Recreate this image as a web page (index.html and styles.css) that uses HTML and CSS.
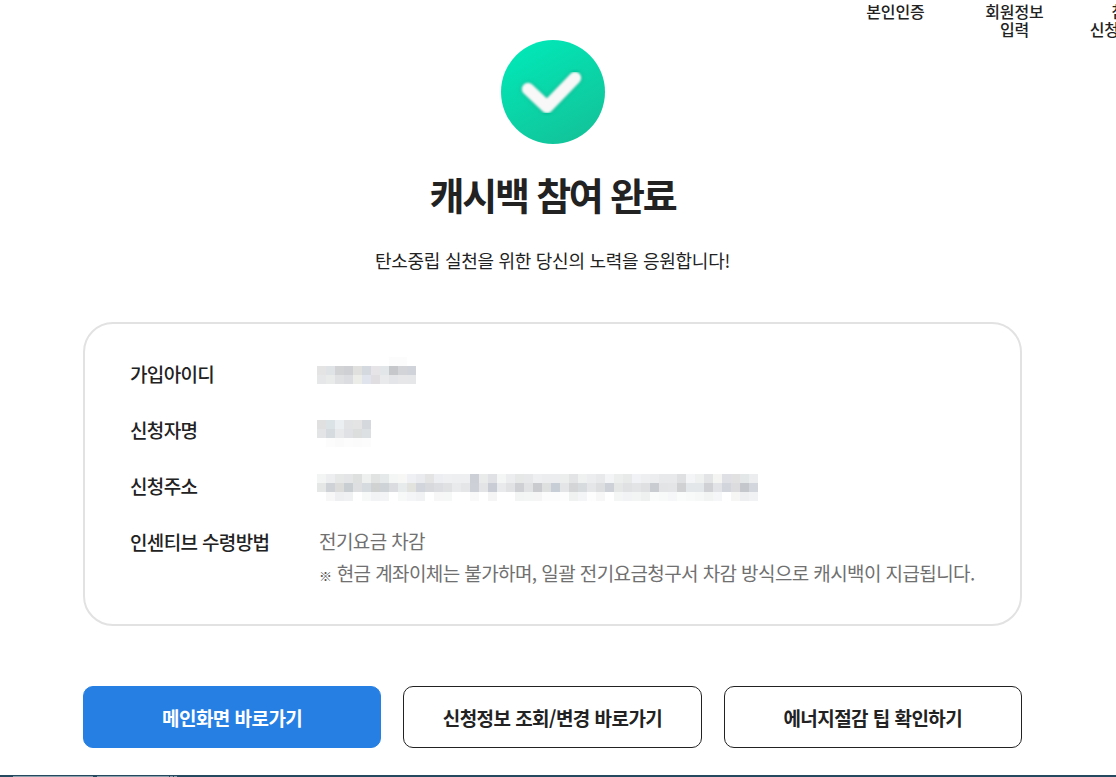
FILE: index.html
```html
<!DOCTYPE html>
<html lang="ko">
<head>
<meta charset="utf-8">
<title>캐시백 참여 완료</title>
<link rel="stylesheet" href="styles.css">
</head>
<body>
<div class="page">
  <ol class="steps">
    <li class="step">본인인증</li>
    <li class="step">회원정보<br>입력</li>
    <li class="step">참여자<br>신청정보입력</li>
  </ol>
  <main class="content">
    <svg class="check" width="106" height="106" viewBox="0 0 106 106" aria-hidden="true">
      <defs>
        <linearGradient id="g" x1="0.25" y1="0.05" x2="0.75" y2="0.95">
          <stop offset="0" stop-color="#02e6b6"/>
          <stop offset="1" stop-color="#12c49a"/>
        </linearGradient>
        <filter id="b" x="-20%" y="-20%" width="140%" height="140%"><feGaussianBlur stdDeviation="0.9"/></filter>
        <filter id="s" x="-30%" y="-30%" width="160%" height="160%"><feGaussianBlur stdDeviation="2"/></filter>
      </defs>
      <circle cx="53" cy="53" r="52" fill="url(#g)"/>
      <path d="M28 50 L47 68 L75 39" class="check-shadow" filter="url(#s)"/>
      <path d="M28 50 L47 68 L75 39" class="check-mark" filter="url(#b)"/>
    </svg>
    <h1 class="title">캐시백 참여 완료</h1>
    <p class="sub">탄소중립 실천을 위한 당신의 노력을 응원합니다!</p>
    <section class="card">
      <div class="row">
        <div class="label">가입아이디</div>
        <svg class="mosaic mosaic-id" width="99" height="27" viewBox="0 0 11 3" shape-rendering="crispEdges" aria-hidden="true">
          <rect x="8" y="0" fill="#fcfcfc"/><rect x="9" y="0" fill="#fcfcfc"/>
          <rect x="0" y="1" fill="#e4e4e4"/><rect x="1" y="1" fill="#dfe3e6"/><rect x="2" y="1" fill="#d2d3d5"/><rect x="3" y="1" fill="#cfd0d4"/><rect x="4" y="1" fill="#e0e1df"/><rect x="5" y="1" fill="#d4d9df"/><rect x="6" y="1" fill="#e6e4e6"/><rect x="7" y="1" fill="#e3e6e8"/><rect x="8" y="1" fill="#c6c7ca"/><rect x="9" y="1" fill="#d3d4d7"/><rect x="10" y="1" fill="#d0d4da"/>
          <rect x="0" y="2" fill="#e6e7e8"/><rect x="1" y="2" fill="#e9eaea"/><rect x="2" y="2" fill="#e0e1e2"/><rect x="3" y="2" fill="#dcdde0"/><rect x="4" y="2" fill="#ecece8"/><rect x="5" y="2" fill="#e0e4ec"/><rect x="6" y="2" fill="#e0dee1"/><rect x="7" y="2" fill="#e8eaec"/><rect x="8" y="2" fill="#e3e5e8"/><rect x="9" y="2" fill="#e7e7e9"/><rect x="10" y="2" fill="#e6e7e8"/>
        </svg>
      </div>
      <div class="row">
        <div class="label">신청자명</div>
        <svg class="mosaic mosaic-name" width="54" height="27" viewBox="0 0 6 3" shape-rendering="crispEdges" aria-hidden="true">
          <rect x="0" y="0" fill="#e0e0e1"/><rect x="1" y="0" fill="#dce3e7"/><rect x="2" y="0" fill="#eceff1"/><rect x="3" y="0" fill="#e1e3e5"/><rect x="4" y="0" fill="#e3e4e3"/><rect x="5" y="0" fill="#d5d9de"/>
          <rect x="0" y="1" fill="#e3e4e5"/><rect x="1" y="1" fill="#d5dbdf"/><rect x="2" y="1" fill="#e8e9ea"/><rect x="3" y="1" fill="#dfe1e4"/><rect x="4" y="1" fill="#dcdddd"/><rect x="5" y="1" fill="#dde0e3"/>
          <rect x="1" y="2" fill="#fcfcfc"/><rect x="2" y="2" fill="#fafafa"/><rect x="3" y="2" fill="#fcfcfc"/><rect x="4" y="2" fill="#fbfbfb"/><rect x="5" y="2" fill="#fcfcfc"/>
        </svg>
      </div>
      <div class="row">
        <div class="label">신청주소</div>
        <svg class="mosaic mosaic-addr" width="441" height="27" viewBox="0 0 49 3" shape-rendering="crispEdges" aria-hidden="true">
          <rect x="0" y="0" fill="#f3f4f4"/><rect x="1" y="0" fill="#eceef0"/><rect x="2" y="0" fill="#e6e7e7"/><rect x="3" y="0" fill="#e3e5e6"/><rect x="4" y="0" fill="#dedfdf"/><rect x="5" y="0" fill="#eef0f0"/><rect x="6" y="0" fill="#e0e3e1"/><rect x="7" y="0" fill="#e6e9ea"/><rect x="8" y="0" fill="#f4f6f5"/><rect x="9" y="0" fill="#f7f7f5"/><rect x="10" y="0" fill="#eef0f3"/><rect x="11" y="0" fill="#eaebef"/><rect x="12" y="0" fill="#e3e4e3"/><rect x="13" y="0" fill="#eceef1"/><rect x="14" y="0" fill="#eef0f1"/><rect x="15" y="0" fill="#eeeff0"/><rect x="16" y="0" fill="#eeeff0"/><rect x="17" y="0" fill="#ccd0d6"/><rect x="18" y="0" fill="#e9eaea"/><rect x="19" y="0" fill="#dfe1e5"/><rect x="20" y="0" fill="#f4f5f5"/><rect x="21" y="0" fill="#ecedef"/><rect x="22" y="0" fill="#e6e7e7"/><rect x="23" y="0" fill="#e6e8ea"/><rect x="24" y="0" fill="#eeeff0"/><rect x="25" y="0" fill="#ecedef"/><rect x="26" y="0" fill="#ebedee"/><rect x="27" y="0" fill="#eceded"/><rect x="28" y="0" fill="#e3e4e5"/><rect x="29" y="0" fill="#eff1f0"/><rect x="30" y="0" fill="#ebedee"/><rect x="31" y="0" fill="#e8e9ea"/><rect x="32" y="0" fill="#f2f4f6"/><rect x="33" y="0" fill="#eceded"/><rect x="34" y="0" fill="#e8e9e9"/><rect x="35" y="0" fill="#f0f2f5"/><rect x="36" y="0" fill="#eeeff0"/><rect x="37" y="0" fill="#ecedee"/><rect x="38" y="0" fill="#e8e9ea"/><rect x="39" y="0" fill="#e8e9ea"/><rect x="40" y="0" fill="#dfe0e1"/><rect x="41" y="0" fill="#f3f5f6"/><rect x="42" y="0" fill="#eff1f1"/><rect x="43" y="0" fill="#e3e4e5"/><rect x="44" y="0" fill="#f4f5f3"/><rect x="45" y="0" fill="#dfe0e6"/><rect x="46" y="0" fill="#e2e1e2"/><rect x="47" y="0" fill="#e4e7e8"/><rect x="48" y="0" fill="#ebedef"/>
          <rect x="0" y="1" fill="#e5e6e6"/><rect x="1" y="1" fill="#cfd3d8"/><rect x="2" y="1" fill="#dcdcda"/><rect x="3" y="1" fill="#c9ced3"/><rect x="4" y="1" fill="#dddfe0"/><rect x="5" y="1" fill="#d6dbdf"/><rect x="6" y="1" fill="#d0d2d2"/><rect x="7" y="1" fill="#ced3d8"/><rect x="8" y="1" fill="#dadcdf"/><rect x="9" y="1" fill="#e8ebec"/><rect x="10" y="1" fill="#e2e2de"/><rect x="11" y="1" fill="#d2d5dc"/><rect x="12" y="1" fill="#d7d9dd"/><rect x="13" y="1" fill="#dbdde0"/><rect x="14" y="1" fill="#e0e1e3"/><rect x="15" y="1" fill="#e9eaec"/><rect x="16" y="1" fill="#e5e6e8"/><rect x="17" y="1" fill="#cdd1d7"/><rect x="18" y="1" fill="#e3e4e5"/><rect x="19" y="1" fill="#c9ccd5"/><rect x="20" y="1" fill="#e9eaeb"/><rect x="21" y="1" fill="#e1e2e3"/><rect x="22" y="1" fill="#ced0d3"/><rect x="23" y="1" fill="#e0e2e3"/><rect x="24" y="1" fill="#c9cbcf"/><rect x="25" y="1" fill="#dee0df"/><rect x="26" y="1" fill="#c8ced5"/><rect x="27" y="1" fill="#e4e5e6"/><rect x="28" y="1" fill="#d3d5d6"/><rect x="29" y="1" fill="#d8dbde"/><rect x="30" y="1" fill="#e5e6e7"/><rect x="31" y="1" fill="#dcdee0"/><rect x="32" y="1" fill="#ced2d8"/><rect x="33" y="1" fill="#e5e6e6"/><rect x="34" y="1" fill="#dfe1e2"/><rect x="35" y="1" fill="#e2e4e5"/><rect x="36" y="1" fill="#dee0e1"/><rect x="37" y="1" fill="#c9ccd0"/><rect x="38" y="1" fill="#e2e4e6"/><rect x="39" y="1" fill="#e4e5e7"/><rect x="40" y="1" fill="#cfd1d3"/><rect x="41" y="1" fill="#e3e7ea"/><rect x="42" y="1" fill="#e4e7e9"/><rect x="43" y="1" fill="#cfd1d4"/><rect x="44" y="1" fill="#e1e3e6"/><rect x="45" y="1" fill="#d3d5dd"/><rect x="46" y="1" fill="#dcdbdd"/><rect x="47" y="1" fill="#c4c8cd"/><rect x="48" y="1" fill="#d3d7dd"/>
          <rect x="1" y="2" fill="#f7f7f7"/><rect x="2" y="2" fill="#eeeff0"/><rect x="3" y="2" fill="#eff1f3"/><rect x="5" y="2" fill="#f7f8f8"/><rect x="6" y="2" fill="#f1f3f4"/><rect x="7" y="2" fill="#f3f4f5"/><rect x="9" y="2" fill="#f7f8f8"/><rect x="10" y="2" fill="#f4f5f6"/><rect x="11" y="2" fill="#f1f2f4"/><rect x="13" y="2" fill="#f7f7f7"/><rect x="14" y="2" fill="#f6f7f7"/><rect x="17" y="2" fill="#f9f9f9"/><rect x="19" y="2" fill="#f5f5f6"/><rect x="22" y="2" fill="#f3f4f4"/><rect x="23" y="2" fill="#f4f5f5"/><rect x="24" y="2" fill="#f5f5f5"/><rect x="25" y="2" fill="#fbfcfb"/><rect x="26" y="2" fill="#fbfcfb"/><rect x="27" y="2" fill="#fcfdfc"/><rect x="28" y="2" fill="#f0f1f1"/><rect x="29" y="2" fill="#f3f5f6"/><rect x="30" y="2" fill="#fcfdfc"/><rect x="31" y="2" fill="#f6f7f6"/><rect x="33" y="2" fill="#f4f5f5"/><rect x="34" y="2" fill="#f2f3f4"/><rect x="35" y="2" fill="#f3f4f4"/><rect x="36" y="2" fill="#eff1f1"/><rect x="37" y="2" fill="#fafbfb"/><rect x="38" y="2" fill="#f8f9f9"/><rect x="39" y="2" fill="#f5f7f8"/><rect x="40" y="2" fill="#fafbfb"/><rect x="41" y="2" fill="#f8f9f9"/><rect x="42" y="2" fill="#f6f7f7"/><rect x="43" y="2" fill="#f2f3f3"/><rect x="44" y="2" fill="#f5f6f7"/><rect x="46" y="2" fill="#f6f6f4"/><rect x="47" y="2" fill="#eeeff0"/><rect x="48" y="2" fill="#f0f2f4"/>
        </svg>
      </div>
      <div class="row">
        <div class="label">인센티브 수령방법</div>
        <div class="value">
          <div>전기요금 차감</div>
          <div><span class="mark">※</span> 현금 계좌이체는 불가하며, 일괄 전기요금청구서 차감 방식으로 캐시백이 지급됩니다.</div>
        </div>
      </div>
    </section>
    <div class="actions">
      <a class="btn btn-primary">메인화면 바로가기</a>
      <a class="btn">신청정보 조회/변경 바로가기</a>
      <a class="btn">에너지절감 팁 확인하기</a>
    </div>
  </main>
  <div class="bottom-bar">
    <span class="seg seg-a"></span>
    <span class="seg seg-b"></span>
    <span class="seg seg-c"></span>
    <span class="seg seg-c"></span>
  </div>
</div>
</body>
</html>
```
FILE: styles.css
```css
* { box-sizing: border-box; }
html, body { margin: 0; padding: 0; }
body {
  width: 1116px;
  height: 777px;
  overflow: hidden;
  background: #fff;
  color: #222;
  font-family: "Noto Sans CJK KR", "Noto Sans", sans-serif;
}
.page { display: flex; flex-direction: column; width: 1116px; height: 777px; overflow: hidden; }
.steps {
  display: flex;
  list-style: none;
  margin: 0 0 0 836px;
  padding: 0;
  height: 39px;
  flex: none;
  width: 280px;
}
.step {
  width: 119px;
  text-align: center;
  font-size: 16px;
  font-weight: 500;
  line-height: 18px;
  letter-spacing: -0.1px;
  padding-top: 2px;
  flex: none;
  white-space: nowrap;
}
.content { width: 939px; margin-left: 83px; display: flex; flex-direction: column; align-items: center; }
.check { display: block; flex: none; }
.check-shadow {
  fill: none;
  stroke: #078a6c;
  stroke-opacity: .35;
  stroke-width: 14;
  stroke-linecap: round;
  stroke-linejoin: round;
}
.check-mark {
  fill: none;
  stroke: #f7f8f7;
  stroke-width: 12.5;
  stroke-linecap: round;
  stroke-linejoin: round;
}
.title {
  margin: 21px 0 0;
  font-size: 38px;
  line-height: 56px;
  font-weight: 700;
  letter-spacing: -2.25px;
  color: #222;
}
.sub {
  margin: 25px 0 0;
  font-size: 18px;
  line-height: 26px;
  letter-spacing: -0.28px;
  color: #222;
}
.card {
  width: 939px;
  height: 304px;
  margin-top: 49px;
  border: 2px solid #e2e2e2;
  border-radius: 30px;
  padding: 25px 45px;
}
.row { display: flex; align-items: flex-start; height: 56px; }
.label {
  width: 189px;
  flex: none;
  font-size: 19px;
  font-weight: 500;
  line-height: 50px;
  letter-spacing: -0.65px;
  color: #222;
}
.mosaic { display: block; margin-left: -2px; }
.mosaic rect { width: 1px; height: 1px; }
.mosaic-id { margin-top: 8px; }
.mosaic-name { margin-top: 15px; }
.mosaic-addr { margin-top: 13px; }
.value {
  font-size: 19px;
  line-height: 32px;
  letter-spacing: -0.6px;
  color: #707070;
  padding-top: 8px;
  white-space: nowrap;
}
.mark { font-size: 13px; letter-spacing: 0; color: #555; }
.actions { display: flex; gap: 22px; width: 939px; margin-top: 60px; }
.btn {
  flex: 1;
  height: 62px;
  display: flex;
  align-items: center;
  justify-content: center;
  border: 1px solid #222;
  border-radius: 10px;
  font-size: 19px;
  font-weight: 700;
  letter-spacing: -0.55px;
  color: #222;
}
.btn-primary { background: #2680e3; border-color: #2680e3; color: #fff; }
.bottom-bar {
  margin-top: auto;
  height: 2px;
  background: #254a60;
  flex: none;
  display: flex;
  align-items: flex-end;
  padding-left: 13px;
  gap: 1px;
}
.seg { display: block; height: 1px; background: #8c9fab; flex: none; }
.seg-a { width: 80px; margin-right: 3px; }
.seg-b { width: 72px; }
.seg-c { width: 3px; }
```
